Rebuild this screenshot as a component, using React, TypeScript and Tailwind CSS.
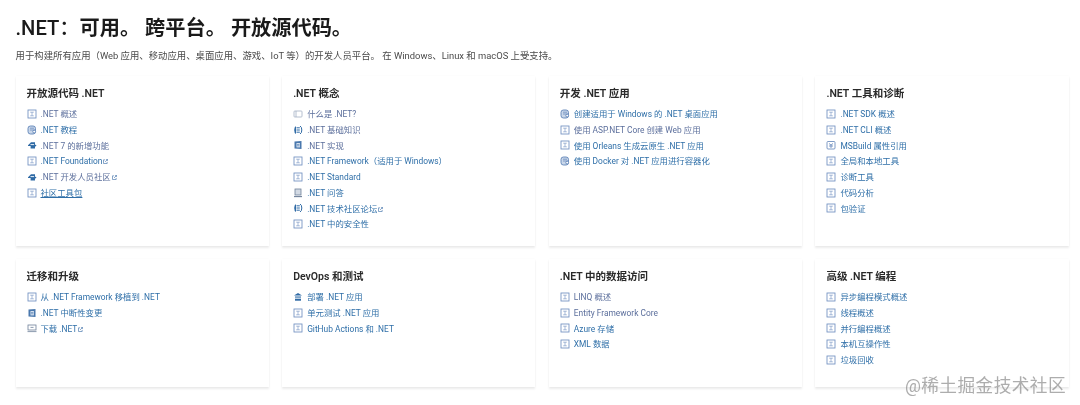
import React from "react";

type IconKind = "overview" | "tutorial" | "whatsnew" | "concept" | "guide" | "howto" | "qa" | "deploy" | "download" | "reference";

type LinkItem = {
  text: string;
  icon?: IconKind;
  external?: boolean;
  visited?: boolean;
  underline?: boolean;
};

type Section = {
  title: string;
  links: LinkItem[];
};

const sections: Section[] = [
  {
    title: "开放源代码 .NET",
    links: [
      { text: ".NET 概述", visited: true },
      { text: ".NET 教程", icon: "tutorial" },
      { text: ".NET 7 的新增功能", icon: "whatsnew", visited: true },
      { text: ".NET Foundation", external: true },
      { text: ".NET 开发人员社区", icon: "whatsnew", external: true, visited: true },
      { text: "社区工具包", underline: true },
    ],
  },
  {
    title: ".NET 概念",
    links: [
      { text: "什么是 .NET?", icon: "concept", visited: true },
      { text: ".NET 基础知识", icon: "guide", visited: true },
      { text: ".NET 实现", icon: "howto", visited: true },
      { text: ".NET Framework（适用于 Windows）" },
      { text: ".NET Standard" },
      { text: ".NET 问答", icon: "qa" },
      { text: ".NET 技术社区论坛", icon: "guide", external: true },
      { text: ".NET 中的安全性" },
    ],
  },
  {
    title: "开发 .NET 应用",
    links: [
      { text: "创建适用于 Windows 的 .NET 桌面应用", icon: "tutorial" },
      { text: "使用 ASP.NET Core 创建 Web 应用", visited: true },
      { text: "使用 Orleans 生成云原生 .NET 应用" },
      { text: "使用 Docker 对 .NET 应用进行容器化", icon: "tutorial" },
    ],
  },
  {
    title: ".NET 工具和诊断",
    links: [
      { text: ".NET SDK 概述" },
      { text: ".NET CLI 概述" },
      { text: "MSBuild 属性引用", icon: "reference" },
      { text: "全局和本地工具" },
      { text: "诊断工具" },
      { text: "代码分析" },
      { text: "包验证" },
    ],
  },
  {
    title: "迁移和升级",
    links: [
      { text: "从 .NET Framework 移植到 .NET" },
      { text: ".NET 中断性变更", icon: "howto" },
      { text: "下载 .NET", icon: "download", external: true },
    ],
  },
  {
    title: "DevOps 和测试",
    links: [
      { text: "部署 .NET 应用", icon: "deploy" },
      { text: "单元测试 .NET 应用" },
      { text: "GitHub Actions 和 .NET" },
    ],
  },
  {
    title: ".NET 中的数据访问",
    links: [
      { text: "LINQ 概述", visited: true },
      { text: "Entity Framework Core", visited: true },
      { text: "Azure 存储" },
      { text: "XML 数据" },
    ],
  },
  {
    title: "高级 .NET 编程",
    links: [
      { text: "异步编程模式概述" },
      { text: "线程概述" },
      { text: "并行编程概述" },
      { text: "本机互操作性" },
      { text: "垃圾回收" },
    ],
  },
];

function DocIcon({ kind = "overview" }: { kind?: IconKind }) {
  return (
    <svg viewBox="0 0 10 10" className="h-[10px] w-[10px] shrink-0 -translate-y-[1px]" fill="none">
      {kind === "overview" && (
        <g stroke="#6f8fc0">
          <rect x="1" y="1" width="8" height="8" strokeWidth="0.85" />
          <path d="M3.2 3.2h3.6M5 3.2v3.6M3.2 6.8h3.6" strokeWidth="0.6" />
        </g>
      )}
      {kind === "reference" && (
        <g stroke="#5f83b8" strokeWidth="0.8">
          <rect x="1" y="1.5" width="8" height="7.5" rx="1" />
          <path d="M3 3.5l2 1.5 2-1.5M5 5v3M3 6h4" />
        </g>
      )}
      {kind === "tutorial" && (
        <g stroke="#5f83b8" strokeWidth="0.9">
          <rect x="1" y="1" width="7.5" height="8" rx="2.4" fill="#c9d7ea" />
          <path d="M3 3.2h4M3 5h5" strokeWidth="0.7" />
          <circle cx="7.2" cy="6.6" r="1.4" fill="#ffffff" />
        </g>
      )}
      {kind === "whatsnew" && (
        <g>
          <path d="M1 5.2l3-3h4v2.2l1.6 1-1.6 1.4v1.6H3.6V6H1z" fill="#2f6aa5" />
          <path d="M3.5 4.6h3.6" stroke="#ffffff" strokeWidth="0.9" />
        </g>
      )}
      {kind === "concept" && (
        <g stroke="#a3b0c4" strokeWidth="0.8">
          <rect x="1" y="2" width="8" height="6" rx="0.8" />
          <path d="M3 2v6" />
        </g>
      )}
      {kind === "guide" && (
        <g>
          <path d="M3 1q-1.8.8-1.8 4T3 9z" fill="#2f6aa5" />
          <path d="M7 1q1.8.8 1.8 4T7 9" stroke="#2f6aa5" strokeWidth="1" />
          <path d="M3.5 2.8h3.3M3.5 5h3.3M3.5 7.2h3.3" stroke="#2f6aa5" strokeWidth="1" />
        </g>
      )}
      {kind === "howto" && (
        <g>
          <path d="M1.5 1.5L8.5 1v8l-7-.5z" fill="#4a78ad" />
          <path d="M3.5 3h3.4v4.4H3.5z" fill="#dfe8f3" />
          <path d="M4 4.4h2.4M4 5.8h2.4" stroke="#4a78ad" strokeWidth="0.7" />
        </g>
      )}
      {kind === "qa" && (
        <g stroke="#6f8099" strokeWidth="0.8">
          <rect x="2" y="1" width="6" height="6" fill="#d3dae4" />
          <path d="M1 8.6h8" strokeWidth="1.1" />
        </g>
      )}
      {kind === "deploy" && (
        <g fill="#2f6aa5">
          <path d="M5 1L9 3.6H1z" />
          <rect x="2" y="4.5" width="6" height="1.1" />
          <rect x="2" y="6.7" width="6" height="2" />
        </g>
      )}
      {kind === "download" && (
        <g stroke="#6f8099" strokeWidth="0.8">
          <rect x="1" y="2" width="8" height="5" />
          <path d="M3.5 4.4h3M0.5 8.6h9" />
        </g>
      )}
    </svg>
  );
}

function ExternalIcon() {
  return (
    <svg viewBox="0 0 6 6" className="ml-[1px] inline-block h-[5px] w-[5px] align-baseline" fill="none" stroke="#4a78ad" strokeWidth="0.8">
      <path d="M2.5 1H.6v4.4H5V3.5M2.5 3.5L5.4.6M3.6.5h1.9v1.9" />
    </svg>
  );
}

function SectionCard({ title, links }: Section) {
  return (
    <section className="bg-white px-[11px] pt-[10px] shadow-[0_1.5px_2px_rgba(0,0,0,0.08),0_0_2px_rgba(0,0,0,0.03)]">
      <h2 className="text-[10.5px] font-semibold leading-[16px] text-[#2a2a2a]">{title}</h2>
      <ul className="mt-[5px]">
        {links.map((link) => (
          <li key={link.text} className="flex h-[15.75px] items-center gap-[4px]">
            <DocIcon kind={link.icon} />
            <a
              className={`text-[8.4px] leading-[15.75px] ${link.visited ? "text-[#5c6f9c]" : "text-[#2f6fa8]"} ${link.underline ? "underline" : ""}`}
            >
              {link.text}
              {link.external && <ExternalIcon />}
            </a>
          </li>
        ))}
      </ul>
    </section>
  );
}

export default function App() {
  return (
    <div className="relative h-[405px] w-[1080px] overflow-hidden bg-white pl-[15.5px] pt-[13.5px] font-['Roboto','Noto_Sans_CJK_SC',sans-serif] blur-[0.35px]">
      <h1 className="text-[20.2px] font-semibold leading-[28px] text-[#1a1a1a]">
        <span className="font-medium">.NET：</span>可用。 跨平台。 开放源代码。
      </h1>
      <p className="mt-[7px] text-[9.4px] leading-[14px] text-[#4a4a4a]">
        用于构建所有应用（Web 应用、移动应用、桌面应用、游戏、IoT 等）的开发人员平台。 在 Windows、Linux 和 macOS 上受支持。
      </p>
      <div className="mt-[13.5px] grid w-[1053px] grid-cols-4 grid-rows-[170px_128px] gap-x-[13.6px] gap-y-[13px]">
        {sections.map((section) => (
          <SectionCard key={section.title} {...section} />
        ))}
      </div>
      <div className="absolute bottom-[9px] left-[905px] text-[17.7px] leading-[20px] tracking-[0.4px] text-[#8a8a8a]/70">@稀土掘金技术社区</div>
    </div>
  );
}
